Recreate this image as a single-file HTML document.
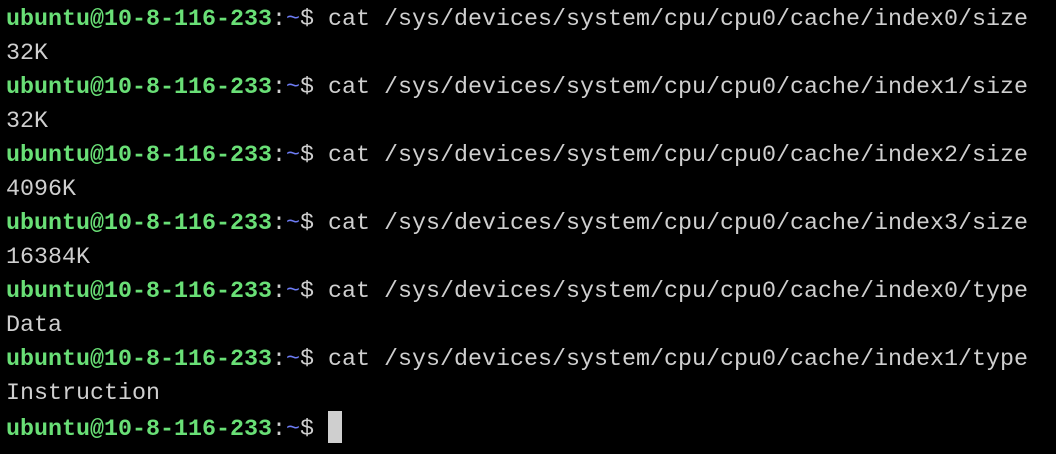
<!DOCTYPE html>
<html><head><style>
html,body{margin:0;padding:0;background:#000;width:1056px;height:454px;overflow:hidden}
pre{margin:0;position:absolute;left:6px;top:3px;font-family:"Liberation Mono",monospace;font-size:23.33px;line-height:34px;color:#cfcfcf}
.g{color:#69df76;font-weight:bold}
.b{color:#6d7cf5}
.cur{display:inline-block;width:14px;height:32px;background:#cfcfcf;vertical-align:-8px}
</style></head><body>
<pre><span class="g">ubuntu@10-8-116-233</span>:<span class="b">~</span>$ cat /sys/devices/system/cpu/cpu0/cache/index0/size
32K
<span class="g">ubuntu@10-8-116-233</span>:<span class="b">~</span>$ cat /sys/devices/system/cpu/cpu0/cache/index1/size
32K
<span class="g">ubuntu@10-8-116-233</span>:<span class="b">~</span>$ cat /sys/devices/system/cpu/cpu0/cache/index2/size
4096K
<span class="g">ubuntu@10-8-116-233</span>:<span class="b">~</span>$ cat /sys/devices/system/cpu/cpu0/cache/index3/size
16384K
<span class="g">ubuntu@10-8-116-233</span>:<span class="b">~</span>$ cat /sys/devices/system/cpu/cpu0/cache/index0/type
Data
<span class="g">ubuntu@10-8-116-233</span>:<span class="b">~</span>$ cat /sys/devices/system/cpu/cpu0/cache/index1/type
Instruction
<span class="g">ubuntu@10-8-116-233</span>:<span class="b">~</span>$ <span class="cur"></span></pre>
</body></html>
